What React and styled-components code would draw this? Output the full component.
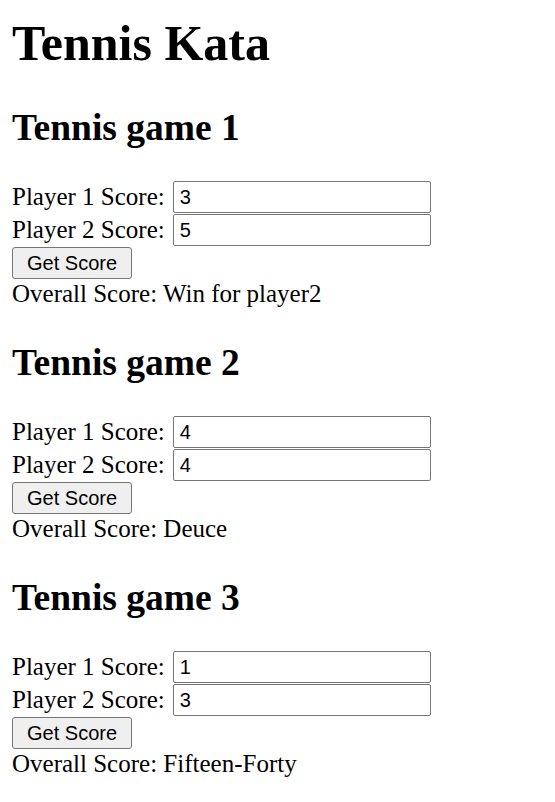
import React from "react";
import styled, { createGlobalStyle } from "styled-components";

const Global = createGlobalStyle`
  html, body { margin: 0; padding: 0; background: #fff; }
  body { font-family: "Liberation Serif", "Times New Roman", serif; color: #000; }
`;

const Page = styled.div`
  padding: 0 12px 20px 12px;
`;

const Title = styled.h1`
  font-family: "Liberation Serif", "Times New Roman", serif;
  font-size: 50px;
  line-height: 56px;
  font-weight: 700;
  margin: 15px 0 0;
`;

const Game = styled.section`
  margin-top: ${(p) => (p.$first ? "36px" : "34px")};
  display: flex;
  flex-direction: column;
  align-items: flex-start;
`;

const GameTitle = styled.h2`
  font-family: "Liberation Serif", "Times New Roman", serif;
  font-size: 37.5px;
  line-height: 42px;
  font-weight: 700;
  margin: 0 0 31px;
`;

const Row = styled.div`
  display: flex;
  align-items: center;
  gap: 8px;
  height: 33px;
`;

const Label = styled.label`
  font-size: 25px;
  line-height: 28px;
  white-space: nowrap;
`;

const Input = styled.input`
  box-sizing: border-box;
  width: 258px;
  height: 32px;
  margin: 0;
  padding: 2px 6px 0;
  border: 1px solid #767676;
  border-radius: 2px;
  font-family: "Liberation Sans", Arial, sans-serif;
  font-size: 20px;
  color: #000;
  background: #fff;
  outline: none;
`;

const Button = styled.button`
  box-sizing: border-box;
  margin-top: 1px;
  height: 32px;
  padding: 0 14px;
  border: 1px solid #767676;
  border-radius: 3px;
  background: #efefef;
  font-family: "Liberation Sans", Arial, sans-serif;
  font-size: 20px;
  color: #000;
  line-height: 1;
`;

const Result = styled.div`
  font-size: 25px;
  line-height: 28px;
  margin-top: 1px;
`;

const games = [
  { name: "Tennis game 1", p1: "3", p2: "5", result: "Win for player2" },
  { name: "Tennis game 2", p1: "4", p2: "4", result: "Deuce" },
  { name: "Tennis game 3", p1: "1", p2: "3", result: "Fifteen-Forty" },
];

export default function App() {
  return (
    <>
      <Global />
      <Page>
        <Title>Tennis Kata</Title>
        {games.map((g, i) => (
          <Game key={g.name} $first={i === 0}>
            <GameTitle>{g.name}</GameTitle>
            <Row>
              <Label>Player 1 Score:</Label>
              <Input defaultValue={g.p1} />
            </Row>
            <Row>
              <Label>Player 2 Score:</Label>
              <Input defaultValue={g.p2} />
            </Row>
            <Button>Get Score</Button>
            <Result>Overall Score: {g.result}</Result>
          </Game>
        ))}
      </Page>
    </>
  );
}
